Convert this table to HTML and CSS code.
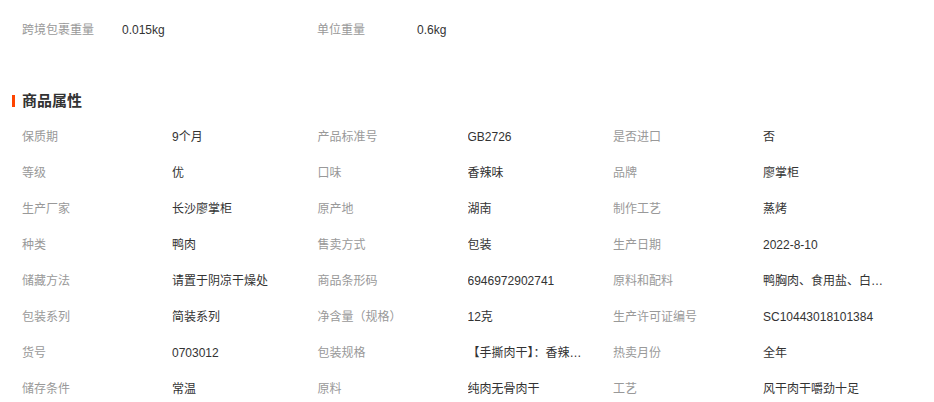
FILE: index.html
```html
<!DOCTYPE html>
<html lang="zh-CN">
<head>
<meta charset="utf-8">
<title>商品属性</title>
<link rel="stylesheet" href="styles.css">
</head>
<body>
<div class="page">
  <div class="weights">
    <div class="wpair"><span class="wlabel">跨境包裹重量</span><span class="wvalue">0.015kg</span></div>
    <div class="wpair"><span class="wlabel">单位重量</span><span class="wvalue">0.6kg</span></div>
  </div>
  <h2 class="title">商品属性</h2>
  <div class="attrs">
    <div class="pair"><span class="label">保质期</span><span class="value">9个月</span></div>
    <div class="pair"><span class="label">产品标准号</span><span class="value">GB2726</span></div>
    <div class="pair"><span class="label">是否进口</span><span class="value">否</span></div>
    <div class="pair"><span class="label">等级</span><span class="value">优</span></div>
    <div class="pair"><span class="label">口味</span><span class="value">香辣味</span></div>
    <div class="pair"><span class="label">品牌</span><span class="value">廖掌柜</span></div>
    <div class="pair"><span class="label">生产厂家</span><span class="value">长沙廖掌柜</span></div>
    <div class="pair"><span class="label">原产地</span><span class="value">湖南</span></div>
    <div class="pair"><span class="label">制作工艺</span><span class="value">蒸烤</span></div>
    <div class="pair"><span class="label">种类</span><span class="value">鸭肉</span></div>
    <div class="pair"><span class="label">售卖方式</span><span class="value">包装</span></div>
    <div class="pair"><span class="label">生产日期</span><span class="value">2022-8-10</span></div>
    <div class="pair"><span class="label">储藏方法</span><span class="value">请置于阴凉干燥处</span></div>
    <div class="pair"><span class="label">商品条形码</span><span class="value">6946972902741</span></div>
    <div class="pair"><span class="label">原料和配料</span><span class="value">鸭胸肉、食用盐、白砂糖、香辛料</span></div>
    <div class="pair"><span class="label">包装系列</span><span class="value">简装系列</span></div>
    <div class="pair"><span class="label">净含量（规格）</span><span class="value">12克</span></div>
    <div class="pair"><span class="label">生产许可证编号</span><span class="value">SC10443018101384</span></div>
    <div class="pair"><span class="label">货号</span><span class="value">0703012</span></div>
    <div class="pair"><span class="label">包装规格</span><span class="value">【手撕肉干】：香辣味12克</span></div>
    <div class="pair"><span class="label">热卖月份</span><span class="value">全年</span></div>
    <div class="pair"><span class="label">储存条件</span><span class="value">常温</span></div>
    <div class="pair"><span class="label">原料</span><span class="value">纯肉无骨肉干</span></div>
    <div class="pair"><span class="label">工艺</span><span class="value">风干肉干嚼劲十足</span></div>
  </div>
</div>
</body>
</html>
```
FILE: styles.css
```css
html, body {
  margin: 0;
  padding: 0;
  background: #fff;
}
body {
  font-family: "Liberation Sans", "Noto Sans CJK SC", sans-serif;
  font-size: 12px;
  color: #333;
}
.page {
  padding: 1px 0 0 22px;
  width: 912px;
}
.weights {
  display: flex;
  height: 58px;
  line-height: 58px;
}
.wpair {
  display: flex;
  align-items: baseline;
  width: 295px;
}
.wlabel {
  width: 100px;
  color: #999;
}
.wvalue {
  color: #333;
}
.title {
  margin: 25px 0 0 0;
  font-size: 15px;
  font-weight: bold;
  color: #333;
  line-height: 34px;
  height: 35px;
  position: relative;
}
.title::before {
  content: "";
  position: absolute;
  left: -10px;
  top: 11px;
  width: 3px;
  height: 12px;
  background: #ff4400;
}
.attrs {
  display: grid;
  grid-template-columns: 295.5px 295.5px 295.5px;
}
.pair {
  display: flex;
  align-items: baseline;
  height: 36px;
  line-height: 36px;
}
.label {
  width: 150px;
  flex: none;
  color: #999;
}
.value {
  width: 124px;
  white-space: nowrap;
  overflow: hidden;
  text-overflow: ellipsis;
  color: #333;
}
```
